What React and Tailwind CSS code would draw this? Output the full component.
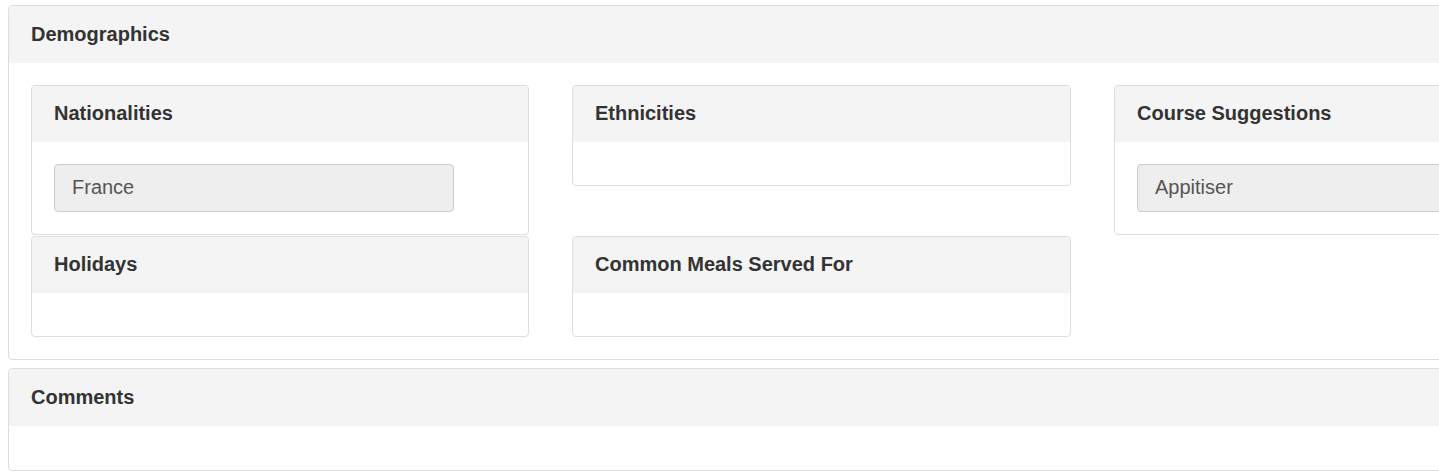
const Panel = ({ title, children, outer }) => (
  <div className="border border-[#dddddd] rounded-[4px] bg-white">
    <div
      className={`bg-[#f4f4f4] rounded-t-[4px] flex items-center px-[22px] pb-[2px] ${
        outer ? "h-[57px]" : "h-[56px]"
      }`}
    >
      <h3 className="text-[20px] font-bold text-[#333333]">{title}</h3>
    </div>
    {children}
  </div>
);

const ReadOnlyInput = ({ value }) => (
  <div className="h-[48px] flex items-center px-[17px] pb-[2px] bg-[#eeeeee] border border-[#cccccc] rounded-[4px] text-[20px] text-[#555555]">
    {value}
  </div>
);

const App = () => {
  return (
    <div
      className="w-[1439px] h-[476px] overflow-hidden bg-white"
      style={{ fontFamily: '"Liberation Sans", Arial, sans-serif' }}
    >
      <div className="w-[1628px] ml-[8px] pt-[5px] flex flex-col gap-[8px]">
        {/* Demographics */}
        <Panel title="Demographics" outer>
          <div className="px-[22px] pt-[22px] pb-[22px] grid grid-cols-[498px_499px_498px] gap-x-[43px] gap-y-[1px] items-start">
            <Panel title="Nationalities">
              <div className="px-[22px] pt-[22px] pb-[22px] w-[444px]">
                <ReadOnlyInput value="France" />
              </div>
            </Panel>
            <Panel title="Ethnicities">
              <div className="h-[43px]" />
            </Panel>
            <Panel title="Course Suggestions">
              <div className="px-[22px] pt-[22px] pb-[22px]">
                <ReadOnlyInput value="Appitiser" />
              </div>
            </Panel>
            <Panel title="Holidays">
              <div className="h-[43px]" />
            </Panel>
            <Panel title="Common Meals Served For">
              <div className="h-[43px]" />
            </Panel>
          </div>
        </Panel>

        {/* Comments */}
        <Panel title="Comments" outer>
          <div className="h-[44px]" />
        </Panel>
      </div>
    </div>
  );
};

export default App;
